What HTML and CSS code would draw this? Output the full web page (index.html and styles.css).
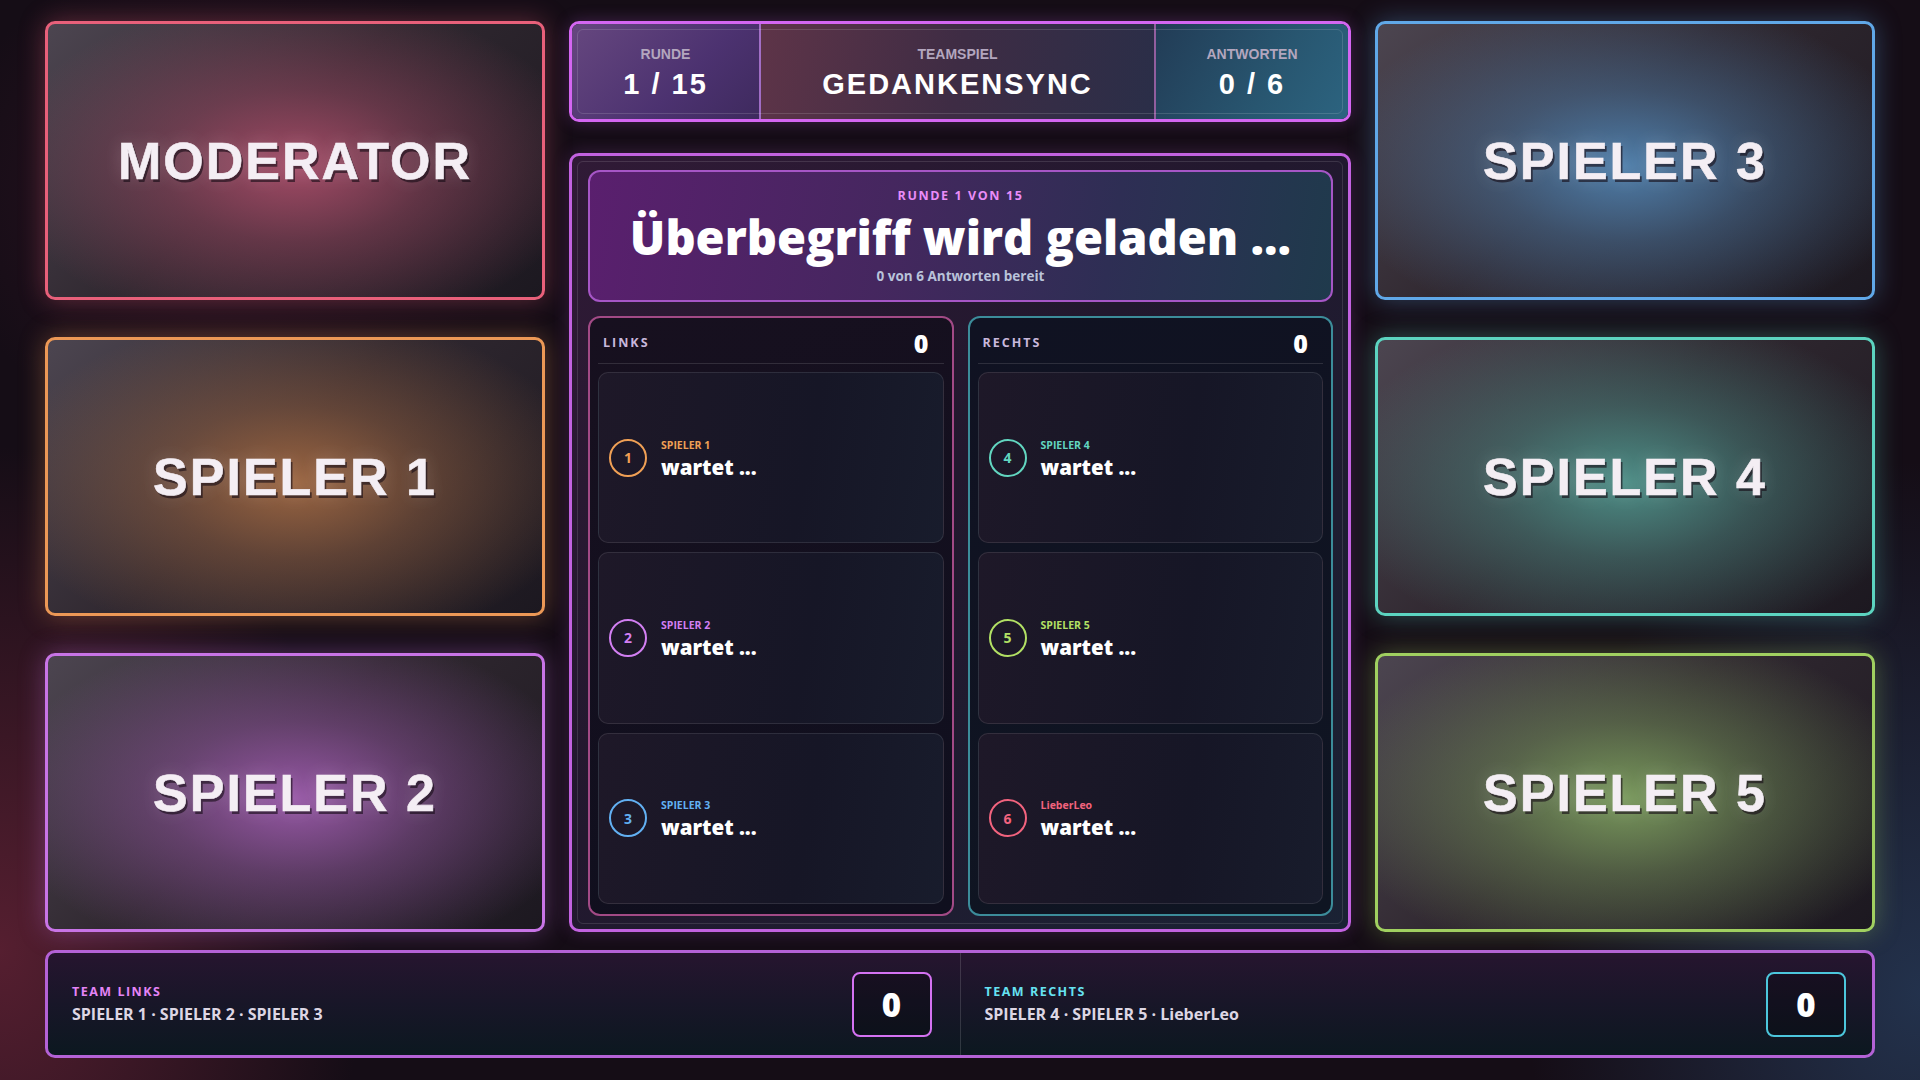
FILE: index.html
```html
<!DOCTYPE html>
<html lang="de">
<head>
    <meta charset="UTF-8">
    <meta name="viewport" content="width=device-width, initial-scale=1.0">
    <title>Gedankensync - Teamspiel</title>
    <link rel="stylesheet" href="styles.css">
</head>
<body>
    <div class="stage">
        <!-- linke Kamera-Kacheln -->
        <div class="cam cam-mod"><span>MODERATOR</span></div>
        <div class="cam cam-p1"><span>SPIELER 1</span></div>
        <div class="cam cam-p2"><span>SPIELER 2</span></div>

        <div class="center">
            <div class="topbar">
                <div class="tb-cell tb-round">
                    <div class="tb-label">RUNDE</div>
                    <div class="tb-value">1 / 15</div>
                </div>
                <div class="tb-cell tb-game">
                    <div class="tb-label">TEAMSPIEL</div>
                    <div class="tb-value">GEDANKENSYNC</div>
                </div>
                <div class="tb-cell tb-answers">
                    <div class="tb-label">ANTWORTEN</div>
                    <div class="tb-value">0 / 6</div>
                </div>
            </div>

            <div class="board">
                <div class="question">
                    <div class="q-round">RUNDE 1 VON 15</div>
                    <div class="q-title">Überbegriff wird geladen ...</div>
                    <div class="q-sub">0 von 6 Antworten bereit</div>
                </div>

                <div class="sides">
                    <div class="side side-left">
                        <div class="side-head"><span class="side-name">LINKS</span><span class="side-score">0</span></div>
                        <div class="answers">
                            <div class="answer c-orange">
                                <div class="num">1</div>
                                <div class="a-text"><div class="a-name">SPIELER 1</div><div class="a-val">wartet ...</div></div>
                            </div>
                            <div class="answer c-violet">
                                <div class="num">2</div>
                                <div class="a-text"><div class="a-name">SPIELER 2</div><div class="a-val">wartet ...</div></div>
                            </div>
                            <div class="answer c-blue">
                                <div class="num">3</div>
                                <div class="a-text"><div class="a-name">SPIELER 3</div><div class="a-val">wartet ...</div></div>
                            </div>
                        </div>
                    </div>
                    <div class="side side-right">
                        <div class="side-head"><span class="side-name">RECHTS</span><span class="side-score">0</span></div>
                        <div class="answers">
                            <div class="answer c-teal">
                                <div class="num">4</div>
                                <div class="a-text"><div class="a-name">SPIELER 4</div><div class="a-val">wartet ...</div></div>
                            </div>
                            <div class="answer c-green">
                                <div class="num">5</div>
                                <div class="a-text"><div class="a-name">SPIELER 5</div><div class="a-val">wartet ...</div></div>
                            </div>
                            <div class="answer c-pink">
                                <div class="num">6</div>
                                <div class="a-text"><div class="a-name">LieberLeo</div><div class="a-val">wartet ...</div></div>
                            </div>
                        </div>
                    </div>
                </div>
            </div>
        </div>

        <!-- rechte Kamera-Kacheln -->
        <div class="cam cam-p3"><span>SPIELER 3</span></div>
        <div class="cam cam-p4"><span>SPIELER 4</span></div>
        <div class="cam cam-p5"><span>SPIELER 5</span></div>
    </div>

    <div class="teams">
        <div class="team">
            <div>
                <div class="team-title t-left">TEAM LINKS</div>
                <div class="team-members">SPIELER 1 · SPIELER 2 · SPIELER 3</div>
            </div>
            <div class="team-score s-left">0</div>
        </div>
        <div class="team">
            <div>
                <div class="team-title t-right">TEAM RECHTS</div>
                <div class="team-members">SPIELER 4 · SPIELER 5 · LieberLeo</div>
            </div>
            <div class="team-score s-right">0</div>
        </div>
    </div>
</body>
</html>
```

FILE: styles.css
```css
* { margin: 0; padding: 0; box-sizing: border-box; }
body {
    width: 1920px; height: 1080px; overflow: hidden;
    padding: 21px 45px 22px;
    font-family: 'Open Sans', 'Noto Sans', sans-serif;
    color: #fff;
    background:
        radial-gradient(ellipse 520px 720px at 0% 88%, rgba(120, 40, 62, 0.65), transparent 70%),
        radial-gradient(ellipse 560px 760px at 100% 92%, rgba(44, 74, 112, 0.6), transparent 70%),
        radial-gradient(ellipse 420px 360px at 12% 18%, rgba(90, 30, 56, 0.35), transparent 70%),
        #150d16;
}

/* Raster: Kacheln links | Mitte | Kacheln rechts */
.stage {
    display: grid;
    grid-template-columns: 500px 782px 500px;
    grid-template-rows: repeat(3, 279px);
    column-gap: 24px; row-gap: 37px;
    grid-auto-flow: column;
}
.center { grid-column: 2; grid-row: 1 / 4; display: flex; flex-direction: column; gap: 31px; }

/* Kamera-Kacheln */
.cam {
    --c: 232, 96, 122; --glow: 160, 74, 100;
    border: 3px solid rgb(var(--c)); border-radius: 10px;
    display: flex; align-items: center; justify-content: center;
    box-shadow: 0 0 26px rgba(var(--c), 0.35);
    background:
        radial-gradient(ellipse 60% 62% at 50% 52%, rgba(var(--glow), 0.95) 0%, rgba(var(--glow), 0.45) 45%, rgba(var(--glow), 0) 100%),
        linear-gradient(135deg, #4c4550 0%, #302830 45%, #1c1820 100%);
}
.cam span {
    font-family: 'Liberation Sans', Arial, sans-serif;
    font-weight: bold; font-size: 52px; letter-spacing: 2px;
    color: #f4eef4;
    -webkit-text-stroke: 0.6px #f4eef4;
    text-shadow: 2px 3px 0 rgba(20, 10, 20, 0.6), 0 0 18px rgba(255, 255, 255, 0.18);
}
.cam-mod { --c: 232, 96, 122; --glow: 168, 76, 104; }
.cam-p1 { --c: 236, 152, 86; --glow: 160, 104, 66; }
.cam-p2 { --c: 200, 116, 230; --glow: 156, 90, 172; }
.cam-p3 { --c: 96, 168, 232; --glow: 80, 130, 176; }
.cam-p4 { --c: 92, 212, 192; --glow: 78, 146, 138; }
.cam-p5 { --c: 160, 208, 96; --glow: 124, 158, 94; }

/* Kopfzeile */
.topbar {
    height: 101px; position: relative; display: flex;
    border: 3px solid #d466f2; border-radius: 10px;
    box-shadow: 0 0 16px rgba(200, 100, 240, 0.25);
    overflow: hidden;
}
.topbar::after {
    content: ''; position: absolute; inset: 5px;
    border: 1px solid rgba(255, 255, 255, 0.14); border-radius: 6px;
    pointer-events: none;
}
.tb-cell {
    display: flex; flex-direction: column; align-items: center; justify-content: center;
    font-family: 'Liberation Sans', Arial, sans-serif; font-weight: bold;
    padding-top: 4px;
}
.tb-round { width: 189px; background: linear-gradient(135deg, #66477f 0%, #4c3270 60%, #3e2a5e 100%); border-right: 2px solid rgba(190, 130, 230, 0.7); }
.tb-game { flex: 1; background: linear-gradient(100deg, #5e3448 0%, #3e2c44 50%, #2a2e48 100%); border-right: 2px solid rgba(190, 130, 230, 0.55); }
.tb-answers { width: 192px; background: linear-gradient(120deg, #223c56 0%, #285670 60%, #2c6480 100%); }
.tb-label { font-size: 14px; color: #b3a6be; margin-bottom: 7px; }
.tb-value { font-size: 29px; letter-spacing: 2px; color: #fff; line-height: 1.1; }

/* Spielfeld */
.board {
    flex: 1; position: relative;
    border: 3px solid #c262e0; border-radius: 10px;
    padding: 14px 15px 13px 16px;
    display: flex; flex-direction: column; gap: 14px;
    background: linear-gradient(135deg, #301a36 0%, #22182e 45%, #1a2234 100%);
    box-shadow: 0 0 18px rgba(200, 100, 240, 0.2);
}
.board::before {
    content: ''; position: absolute; inset: 5px;
    border: 1px solid rgba(255, 255, 255, 0.12); border-radius: 6px;
    pointer-events: none;
}
.question {
    height: 132px; position: relative;
    border: 2px solid #a656c6; border-radius: 12px;
    background: linear-gradient(100deg, #5a1f6e 0%, #45275f 40%, #2e2e54 70%, #1f3a4c 100%);
    display: flex; flex-direction: column; align-items: center; justify-content: center;
}
.q-round { font-size: 12.5px; font-weight: bold; letter-spacing: 1.6px; color: #ea8cf8; line-height: 16px; }
.q-title { font-size: 47px; font-weight: 800; line-height: 50px; margin-top: 8px; }
.q-sub { font-size: 13.5px; font-weight: bold; color: #b9c3da; line-height: 16px; margin-top: 6px; }

.sides { flex: 1; display: grid; grid-template-columns: 1fr 1fr; gap: 14px; }
.side {
    border: 2px solid; border-radius: 12px;
    padding: 0 8px 10px;
    display: flex; flex-direction: column;
    background: linear-gradient(160deg, #17101f 0%, #0f0f1e 100%);
}
.side-left { border-color: #a24a86; }
.side-right { border-color: #3c8c9a; background: linear-gradient(160deg, #101222 0%, #0f1522 100%); }
.side-head {
    height: 46px; display: flex; align-items: center; justify-content: space-between;
    padding: 4px 15px 0 5px;
    border-bottom: 1px solid rgba(255, 255, 255, 0.12);
}
.side-name { font-size: 12.5px; font-weight: bold; letter-spacing: 2px; color: #c8b8dc; }
.side-score { font-size: 25px; font-weight: 800; }
.answers { flex: 1; display: flex; flex-direction: column; gap: 9px; margin-top: 8px; }
.answer {
    flex: 1; display: flex; align-items: center; gap: 14px;
    padding-left: 10px;
    border: 1px solid rgba(255, 255, 255, 0.1); border-radius: 10px;
    background: linear-gradient(100deg, #1e1828 0%, #161626 60%, #181c2c 100%);
}
.num {
    width: 38px; height: 38px; border-radius: 50%;
    border: 2px solid var(--ac);
    display: flex; align-items: center; justify-content: center;
    font-size: 14px; font-weight: bold; color: var(--ac);
}
.a-text { padding-top: 2px; }
.a-name { font-size: 10.5px; font-weight: bold; color: var(--ac); line-height: 14px; }
.a-val { font-size: 20.5px; font-weight: 800; line-height: 26px; margin-top: 2px; }
.c-orange { --ac: #f0a055; }
.c-violet { --ac: #d27ff2; }
.c-blue { --ac: #62b0f2; }
.c-teal { --ac: #62d6c0; }
.c-green { --ac: #b2e064; }
.c-pink { --ac: #f2637e; }

/* Team-Leiste unten */
.teams {
    height: 108px; margin-top: 18px;
    border: 3px solid #b462d6; border-radius: 10px;
    display: flex;
    background: linear-gradient(180deg, #26152f 0%, #181628 50%, #0c1820 100%);
}
.team {
    flex: 1; display: flex; align-items: center; justify-content: space-between;
    padding: 0 24px;
}
.team + .team { border-left: 1px solid rgba(255, 255, 255, 0.14); }
.team-title { font-size: 12.5px; font-weight: bold; letter-spacing: 1.5px; margin-bottom: 3px; }
.t-left { color: #e484f6; }
.t-right { color: #66e2f2; }
.team-members { font-size: 16px; font-weight: bold; color: #ddd6e4; }
.team-score {
    width: 80px; height: 65px;
    border: 2px solid; border-radius: 8px;
    display: flex; align-items: center; justify-content: center;
    font-size: 33px; font-weight: 800;
    background: rgba(0, 0, 0, 0.25);
}
.s-left { border-color: #d472f2; margin-right: 4px; }
.s-right { border-color: #4cc6dc; margin-right: 2px; }
```
